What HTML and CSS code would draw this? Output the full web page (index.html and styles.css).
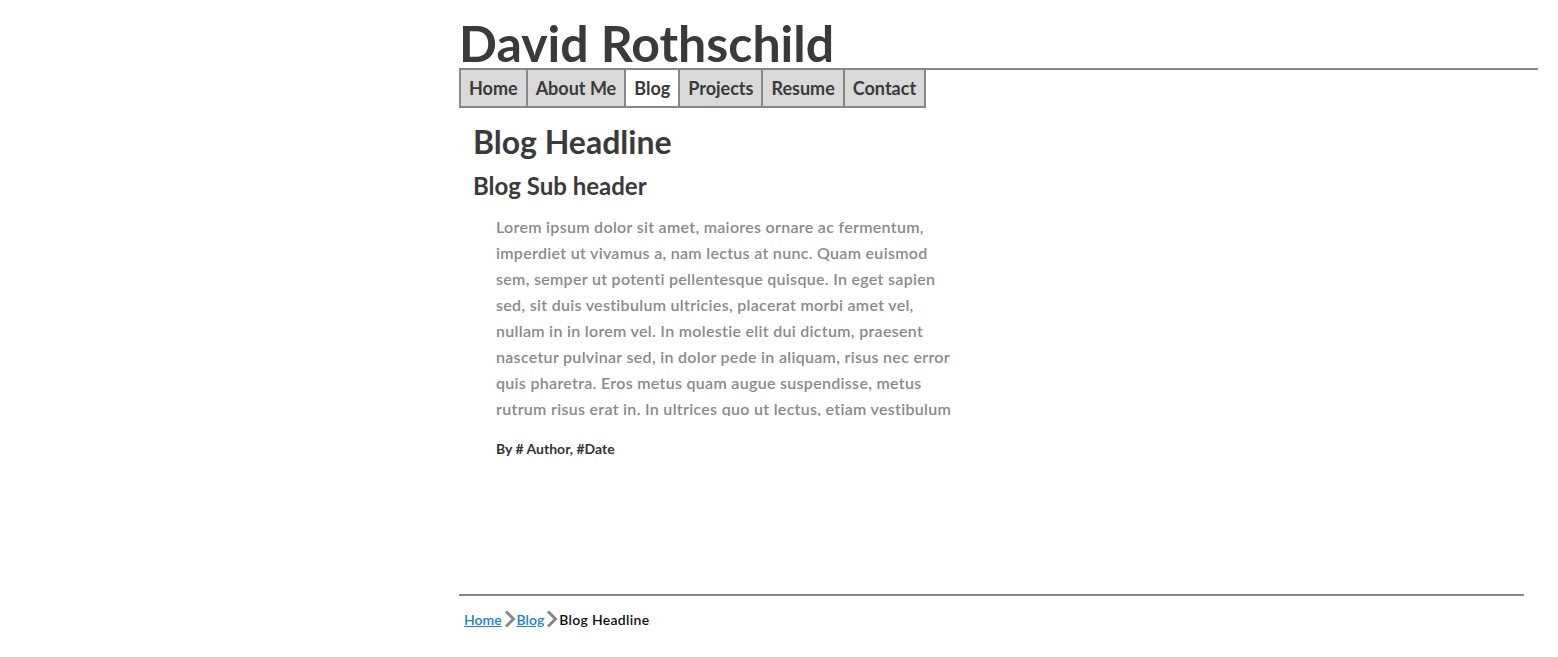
FILE: index.html
```html
<!DOCTYPE html>
<html lang="en">
<head>
<meta charset="utf-8">
<title>David Rothschild - Blog</title>
<link rel="stylesheet" href="styles.css">
</head>
<body>
<div class="page">
  <header class="site-header">
    <h1 class="site-title">David Rothschild</h1>
  </header>
  <nav class="main-nav">
    <a class="nav-item" href="#">Home</a>
    <a class="nav-item" href="#">About Me</a>
    <a class="nav-item active" href="#">Blog</a>
    <a class="nav-item" href="#">Projects</a>
    <a class="nav-item" href="#">Resume</a>
    <a class="nav-item" href="#">Contact</a>
  </nav>
  <main class="content">
    <article class="post">
      <h2 class="post-title">Blog Headline</h2>
      <h3 class="post-sub">Blog Sub header</h3>
      <div class="post-body">
        <p>Lorem ipsum dolor sit amet, maiores ornare ac fermentum, imperdiet ut vivamus a, nam lectus at nunc. Quam euismod sem, semper ut potenti pellentesque quisque. In eget sapien sed, sit duis vestibulum ultricies, placerat morbi amet vel, nullam in in lorem vel. In molestie elit dui dictum, praesent nascetur pulvinar sed, in dolor pede in aliquam, risus nec error quis pharetra. Eros metus quam augue suspendisse, metus rutrum risus erat in.  In ultrices quo ut lectus, etiam vestibulum urna, a est pretium luctus euismod nisl, purus vel.</p>
      </div>
      <p class="post-meta">By # Author, #Date</p>
    </article>
  </main>
  <footer class="site-footer">
    <div class="crumbs">
      <a href="#">Home</a>
      <svg class="chev" width="12" height="18" viewBox="0 0 12 18"><path d="M2 1.5 L9.5 9 L2 16.5" fill="none" stroke="#888" stroke-width="3"/></svg>
      <a href="#">Blog</a>
      <svg class="chev" width="12" height="18" viewBox="0 0 12 18"><path d="M2 1.5 L9.5 9 L2 16.5" fill="none" stroke="#888" stroke-width="3"/></svg>
      <span class="current">Blog Headline</span>
    </div>
  </footer>
</div>
</body>
</html>
```

FILE: styles.css
```css
html, body {
  margin: 0;
  padding: 0;
  background: #fff;
}

body {
  font-family: Lato, "Open Sans", "Liberation Sans", sans-serif;
  color: #3a3a3a;
}

.page {
  margin-left: 459px;
  margin-right: 20px;
}

.site-header {
  border-bottom: 2px solid #888;
}

.site-title {
  margin: 0;
  padding-top: 18px;
  font-size: 50px;
  line-height: 50px;
  font-weight: 700;
  color: #3a3a3a;
}

.main-nav {
  display: flex;
}

.nav-item {
  display: block;
  padding: 0 8px;
  height: 36px;
  line-height: 37px;
  font-size: 18px;
  font-weight: 700;
  color: #3a3a3a;
  text-decoration: none;
  background: #d9d9d9;
  border: 2px solid #888;
  border-top: none;
  margin-left: -2px;
}

.nav-item:first-child {
  margin-left: 0;
}

.nav-item.active {
  background: #fff;
}

.content {
  height: 486px;
  padding-left: 14px;
}

.post-title {
  margin: 0;
  padding-top: 14px;
  font-size: 32px;
  line-height: 40px;
  font-weight: 700;
}

.post-sub {
  margin: 0;
  padding-top: 9px;
  font-size: 24px;
  line-height: 30px;
  font-weight: 700;
}

.post-body {
  margin: 13px 0 0 23px;
  width: 461px;
  height: 202px;
  overflow: hidden;
}

.post-body p {
  margin: 0;
  font-size: 16px;
  line-height: 26px;
  letter-spacing: 0.3px;
  font-weight: 600;
  color: #8a8a8a;
}

.post-meta {
  margin: 24px 0 0 23px;
  font-size: 14px;
  font-weight: 700;
  color: #333;
}

.site-footer {
  margin-right: 14px;
  border-top: 2px solid #888;
  padding: 14px 0 0 5px;
}

.crumbs {
  display: flex;
  align-items: center;
  font-size: 14px;
  font-weight: 600;
}

.crumbs a {
  color: #1b82d4;
  text-decoration: underline;
}

.crumbs .chev {
  margin: 0 1px 0 2px;
}

.crumbs .current {
  color: #111;
  letter-spacing: 0.3px;
}
```
